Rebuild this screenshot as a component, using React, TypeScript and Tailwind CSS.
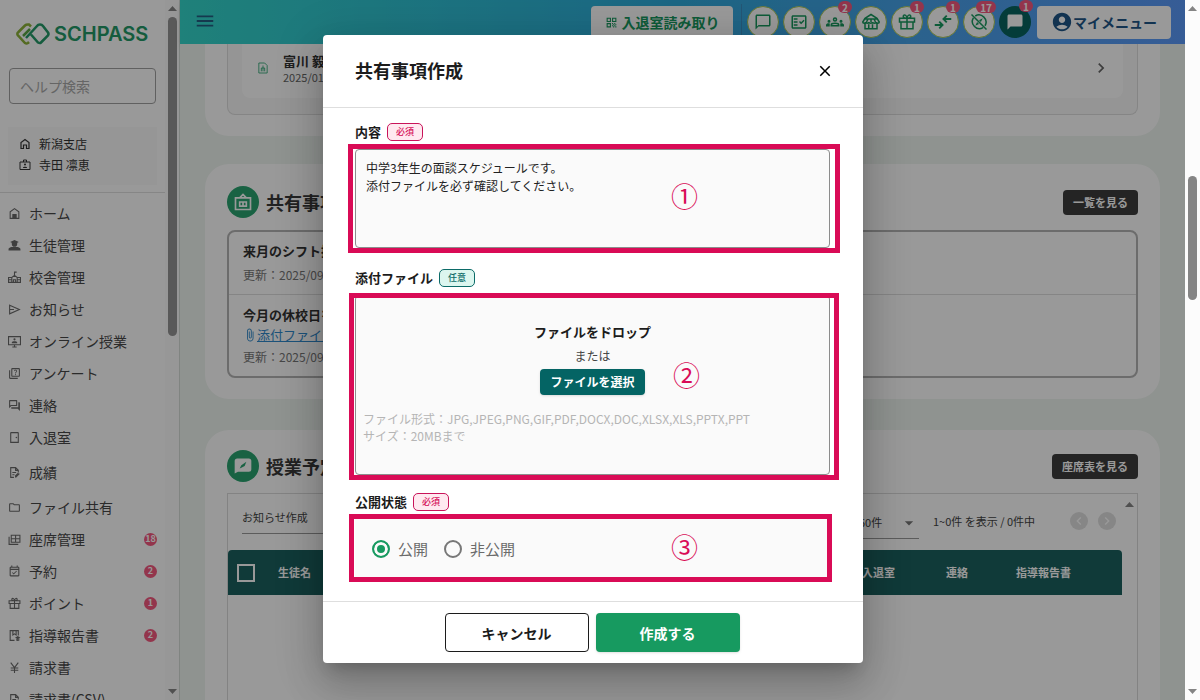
import type { ReactNode } from "react";
import {
  MdAccountCircle,
  MdArrowDropDown,
  MdAttachFile,
  MdChatBubble,
  MdChevronLeft,
  MdChevronRight,
  MdClose,
  MdMenu,
  MdOutlineChatBubbleOutline,
  MdOutlineEventAvailable,
  MdOutlineFactCheck,
  MdOutlineFolder,
  MdOutlineForum,
  MdOutlineQuiz,
  MdOutlineSensorDoor,
  MdQrCode,
} from "react-icons/md";

type IconProps = {
  className?: string;
};

type MenuItem = {
  label: string;
  icon: (props: IconProps) => ReactNode;
  count?: number;
  tall?: boolean;
};

type HeaderAction = {
  label: string;
  icon: (props: IconProps) => ReactNode;
  count?: number;
  filled?: boolean;
};

function LineIcon({ className, children }: IconProps & { children: ReactNode }) {
  return (
    <svg
      className={className}
      viewBox="0 0 24 24"
      width="1em"
      height="1em"
      fill="none"
      stroke="currentColor"
      strokeWidth="2"
      aria-hidden="true"
    >
      {children}
    </svg>
  );
}

function HouseIcon({ className }: IconProps) {
  return (
    <LineIcon className={className}>
      <path d="M4 21V9l8-6 8 6v12z" />
      <path d="M9 21v-7h6v7z" fill="currentColor" />
    </LineIcon>
  );
}

function BranchIcon({ className }: IconProps) {
  return (
    <LineIcon className={className}>
      <path d="M4 21V9l8-6 8 6v12h-5v-7H9v7z" strokeWidth="2.400" />
    </LineIcon>
  );
}

function StudentIcon({ className }: IconProps) {
  return (
    <LineIcon className={className}>
      <path
        d="M12 2 4 5.500l3 1.300V9a5 5 0 0 0 10 0V6.800l3-1.300zM1 21v-2c0-3 6-4.500 11-4.500s11 1.500 11 4.500v2z"
        fill="currentColor"
        stroke="none"
      />
    </LineIcon>
  );
}

function SchoolIcon({ className }: IconProps) {
  return (
    <LineIcon className={className}>
      <path d="M1 21V12h6l5-4 5 4h6v9zM7 12v9M17 12v9M12 8V2h4M10 21v-5h4v5M1 16h6M17 16h6" />
    </LineIcon>
  );
}

function SendIcon({ className }: IconProps) {
  return (
    <LineIcon className={className}>
      <path d="M3 4 21 12 3 20zM3 12h8" />
    </LineIcon>
  );
}

function LessonIcon({ className }: IconProps) {
  return (
    <LineIcon className={className}>
      <path d="M1 3h22v15H1zM8 22h8M12 18v4" />
      <path d="M12 6a2 2 0 1 0 0 4 2 2 0 0 0 0-4zM7 15v-1c0-3 10-3 10 0v1z" fill="currentColor" stroke="none" />
    </LineIcon>
  );
}

function GradeIcon({ className }: IconProps) {
  return (
    <LineIcon className={className}>
      <path d="M11 21H5V3h9l5 5v4M14 3v5h5M8 12h7M8 16h4M14 21l7-7M14 21v-3l5-5" />
    </LineIcon>
  );
}

function SeatIcon({ className }: IconProps) {
  return (
    <LineIcon className={className}>
      <path d="M6 4h16v13H6zM6 10.500h16M14 4v13M2 7v14h17" />
    </LineIcon>
  );
}

function GiftIcon({ className }: IconProps) {
  return (
    <LineIcon className={className}>
      <path d="M4 12h16v9H4zM2 7h20v5H2zM12 7v14M12 7C9 7 7 6 7 4.500S8.500 2 10 3s2 2.500 2 4zM12 7c3 0 5-1 5-2.500S15.500 2 14 3s-2 2.500-2 4z" />
    </LineIcon>
  );
}

function ReportIcon({ className }: IconProps) {
  return (
    <LineIcon className={className}>
      <path d="M12 21H4V3h15v9M9 3v8l3-2 3 2V3" />
      <path d="m18 13 5 3-5 3-5-3zM15 19v2l3 1 3-1v-2z" fill="currentColor" stroke="none" />
    </LineIcon>
  );
}

function YenIcon({ className }: IconProps) {
  return (
    <LineIcon className={className}>
      <path d="m5 3 7 9 7-9M12 12v10M5 13h14M5 17h14" />
    </LineIcon>
  );
}

function BadgeIcon({ className }: IconProps) {
  return (
    <LineIcon className={className}>
      <path d="M2 6h20v15H2zM9 6V2h6v4" />
      <path d="M12 9a2 2 0 1 0 0 4 2 2 0 0 0 0-4zM8 18v-1c0-2 8-2 8 0v1z" fill="currentColor" stroke="none" />
    </LineIcon>
  );
}

function GroupsIcon({ className }: IconProps) {
  return (
    <LineIcon className={className}>
      <path d="M7 17v-1c0-3 10-3 10 0v1z" />
      <circle cx="12" cy="8.500" r="2" />
      <path
        d="M4 9a2 2 0 1 0 0 4 2 2 0 0 0 0-4zM20 9a2 2 0 1 0 0 4 2 2 0 0 0 0-4zM0 18v-2c0-2 3-2.500 5-2v4zM24 18v-2c0-2-3-2.500-5-2v4z"
        fill="currentColor"
        stroke="none"
      />
    </LineIcon>
  );
}

function MarketIcon({ className }: IconProps) {
  return (
    <LineIcon className={className}>
      <path d="M12 2 4 7l-3 5c0 2 4 2 4 0 0 2 4 2 4 0 0 2 5 2 5 0 0 2 5 2 5 0 0 2 4 2 4 0l-3-5zM4 8h16M4 14v7h16v-7M9 21v-6M14 21v-6M8 8l-2 4M12 8v4M16 8l2 4" />
    </LineIcon>
  );
}

function MergeIcon({ className }: IconProps) {
  return (
    <LineIcon className={className}>
      <path d="M1 16h10M7 11.500l4.500 4.500L7 20.500M23 8H13M17 3.500 12.500 8l4.500 4.500" strokeWidth="2.400" />
    </LineIcon>
  );
}

function CompassOffIcon({ className }: IconProps) {
  return (
    <LineIcon className={className}>
      <path d="M7 4a9.500 9.500 0 0 1 13 13M4.500 6.500a9.500 9.500 0 0 0 13 13M2 2l20 20" />
      <path d="m17 7-5 2.500 2.500 2.500zM7 17l2.500-5 2.500 2.500z" fill="currentColor" stroke="none" />
    </LineIcon>
  );
}

const menuItems: MenuItem[] = [
  { label: "ホーム", icon: HouseIcon },
  { label: "生徒管理", icon: StudentIcon },
  { label: "校舎管理", icon: SchoolIcon },
  { label: "お知らせ", icon: SendIcon },
  { label: "オンライン授業", icon: LessonIcon },
  { label: "アンケート", icon: MdOutlineQuiz },
  { label: "連絡", icon: MdOutlineForum },
  { label: "入退室", icon: MdOutlineSensorDoor },
  { label: "成績", icon: GradeIcon, tall: true },
  { label: "ファイル共有", icon: MdOutlineFolder },
  { label: "座席管理", icon: SeatIcon, count: 18 },
  { label: "予約", icon: MdOutlineEventAvailable, count: 2 },
  { label: "ポイント", icon: GiftIcon, count: 1 },
  { label: "指導報告書", icon: ReportIcon, count: 2 },
  { label: "請求書", icon: YenIcon },
  { label: "請求書(CSV)", icon: GradeIcon },
];

const headerActions: HeaderAction[] = [
  { label: "メッセージ", icon: MdOutlineChatBubbleOutline },
  { label: "チェック", icon: MdOutlineFactCheck },
  { label: "グループ", icon: GroupsIcon, count: 2 },
  { label: "校舎", icon: MarketIcon },
  { label: "ポイント", icon: GiftIcon, count: 1 },
  { label: "振替", icon: MergeIcon, count: 1 },
  { label: "未確認", icon: CompassOffIcon, count: 17 },
  { label: "連絡", icon: MdChatBubble, count: 1, filled: true },
];

function Sidebar() {
  return (
    <aside className="flex w-[180px] shrink-0 overflow-hidden border-r border-[#d5dcd8] bg-white">
      <div className="min-w-0 flex-1">
        <div className="flex h-[68px] items-center gap-1 pl-4">
          <svg viewBox="0 0 34 22" className="h-[22px] w-[34px]" fill="none" strokeWidth="2.500" aria-hidden="true">
            <path d="M13 19 12 20q-1.500 1-3 0L2 12.500a2 2 0 0 1 0-3L9 2.500q1-1 3-1h1l2 2" stroke="#8cb33a" />
            <path d="m10 15 11-12q1-1.500 3-1.500t3 1.500l5 6.500q1 1.500 0 3l-7 7q-1 1-3 0l-7-8" stroke="#239a68" />
            <path d="m7 13 7-7" stroke="#5aa545" />
          </svg>
          <span className="font-[Inter] text-xl font-semibold text-[#239a68]">SCHPASS</span>
        </div>
        <div className="pr-2 pl-[9px]">
          <input
            type="text"
            aria-label="ヘルプ検索"
            placeholder="ヘルプ検索"
            className="h-9 w-[147px] rounded border border-[#a0a0a0] bg-white px-2.5 text-sm placeholder:text-[#a9a9a9]"
          />
        </div>
        <div className="mx-2 mt-[23px] flex h-[58px] flex-col justify-center gap-[3px] bg-[#fafafa] pb-1 pl-[11px] text-xs leading-[18px] text-[#333]">
          <p className="flex items-center gap-2">
            <BranchIcon className="size-3" />
            新潟支店
          </p>
          <p className="flex items-center gap-2">
            <BadgeIcon className="size-3" />
            寺田 凛恵
          </p>
        </div>
        <nav className="mt-[7px] border-t border-[#e0e0e0] pt-1">
          {menuItems.map(({ label, icon: Icon, count, tall }) => (
            <a
              key={label}
              href="#"
              className={`flex items-center pl-2 text-sm text-[#484848] ${tall ? "h-[38px]" : "h-8"}`}
            >
              <Icon className="mr-2 size-[13px] text-[#6a6a6a]" />
              <span className="flex-1">{label}</span>
              {count && (
                <span className="mr-2 flex size-[13px] items-center justify-center rounded-full bg-[#f5597f] text-[9px] font-bold text-white">
                  {count}
                </span>
              )}
            </a>
          ))}
        </nav>
      </div>
      <div className="flex h-full w-[14px] flex-col items-center bg-[#fcfcfc] py-1.5">
        <MenuArrow className="rotate-180" />
        <div className="mt-1.5 h-[319px] w-[9px] rounded-full bg-[#949494]" />
        <MenuArrow className="mt-auto" />
      </div>
    </aside>
  );
}

function MenuArrow({ className }: IconProps) {
  return (
    <svg viewBox="0 0 9 5" className={`h-[5px] w-[9px] shrink-0 fill-[#858585] ${className}`} aria-hidden="true">
      <path d="M0 0h9L4.500 5z" />
    </svg>
  );
}

function Header() {
  return (
    <header className="flex h-11 shrink-0 items-center justify-between bg-linear-to-r from-[#34d7cb] via-[#30aadd] to-[#5b9afa] pr-[14px] pl-[14px] shadow-md">
      <button type="button" aria-label="メニュー" className="pb-0.5 text-[#245f83]">
        <MdMenu className="size-[22px]" />
      </button>
      <div className="flex items-center">
        <button
          type="button"
          className="mr-2 flex h-8 w-[142px] items-center justify-center gap-1 rounded-sm bg-white text-sm font-bold text-[#18995f]"
        >
          <MdQrCode className="size-[13px]" />
          入退室読み取り
        </button>
        <div className="mr-[5px] h-9 w-px bg-[#3d8fc4]" />
        <div className="flex gap-1">
          {headerActions.map(({ label, icon: Icon, count, filled }, index) => (
            <button
              key={index}
              type="button"
              aria-label={label}
              className={`relative flex size-8 items-center justify-center rounded-full ${
                filled ? "bg-[#08655f] text-white" : "border border-[#a9c95a] bg-white text-[#18995f]"
              }`}
            >
              <Icon className="size-[18px]" />
              {count && (
                <span className="absolute -top-1.5 -right-0.5 flex h-3 min-w-3.5 items-center justify-center rounded-full bg-[#f5597f] px-1 text-[10px] font-bold text-white">
                  {count}
                </span>
              )}
            </button>
          ))}
        </div>
        <button
          type="button"
          className="ml-1.5 flex h-[33px] w-[134px] items-center justify-center rounded-sm bg-white text-sm font-bold text-[#1e5688]"
        >
          <MdAccountCircle className="size-[22px]" />
          マイメニュー
        </button>
      </div>
    </header>
  );
}

function SectionHead({ icon, title, action }: { icon: ReactNode; title: string; action: string }) {
  return (
    <div className="flex items-center justify-between">
      <div className="flex items-center gap-[7px]">
        <span className="flex size-8 items-center justify-center rounded-full bg-[#2aa470] text-white">{icon}</span>
        <h2 className="text-lg font-bold text-[#3a3a3a]">{title}</h2>
      </div>
      <button type="button" className="h-[25px] rounded-sm bg-[#3c3c3c] px-2.5 text-[11px] font-bold text-white">
        {action}
      </button>
    </div>
  );
}

function Content() {
  return (
    <main className="flex-1 overflow-hidden bg-[#eff5f0] px-[25px]">
      <section className="rounded-b-3xl bg-white px-[22px] pb-[21px]">
        <div className="rounded-b-lg border border-t-0 border-[#dedede] bg-[#f8f8f8] px-[14px] pb-4">
          <div className="flex h-[54px] items-center rounded-b-lg bg-white pr-3 pb-1.5 pl-4">
            <svg viewBox="0 0 12 14" className="mr-[15px] h-3 w-2.5" fill="none" stroke="#2aa470" aria-hidden="true">
              <path d="M1 13V1h7l3 3v9zM4 11V7h4v4M6 4v7" />
            </svg>
            <div className="flex-1">
              <p className="text-[13px] leading-[17px] font-bold text-[#333]">富川 毅</p>
              <p className="text-[11px] leading-4 text-[#666]">2025/01/15</p>
            </div>
            <MdChevronRight className="size-5 text-[#666]" />
          </div>
        </div>
      </section>

      <section className="mt-7 rounded-3xl bg-white px-[22px] pt-[22px] pb-[21px]">
        <SectionHead icon={<BuildingIcon />} title="共有事項" action="一覧を見る" />
        <div className="mt-3 rounded-lg border-2 border-[#b4b4b4]">
          <div className="h-[63px] border-b border-[#dedede] px-[14px] pt-[9px]">
            <p className="text-[13px] leading-5 font-bold text-[#333]">来月のシフト提出について</p>
            <p className="mt-1 text-xs leading-5 text-[#777]">更新：2025/09/10</p>
          </div>
          <div className="h-[81px] px-[14px] pt-2.5">
            <p className="text-[13px] leading-5 font-bold text-[#333]">今月の休校日をご確認ください</p>
            <a href="#" className="flex items-center text-[13px] leading-5 text-[#3089cb]">
              <MdAttachFile className="size-[14px]" />
              <span className="underline">添付ファイル</span>
            </a>
            <p className="mt-0.5 text-xs leading-5 text-[#777]">更新：2025/09/01</p>
          </div>
        </div>
      </section>

      <section className="mt-[31px] h-[400px] rounded-3xl bg-white px-[22px] pt-5">
        <SectionHead icon={<BoardIcon />} title="授業予定" action="座席表を見る" />
        <div className="mt-[11px] flex h-80 border border-[#dadada]">
          <div className="min-w-0 flex-1">
            <div className="flex h-14 items-center justify-between pb-0.5 pl-[14px] text-[#444]">
              <select aria-label="操作" className="mb-1.5 h-8 w-40 appearance-none border-b border-[#999] text-[11px]">
                <option>お知らせ作成</option>
              </select>
              <div className="flex items-center text-[11px]">
                <div className="relative mr-[14px] pt-1">
                  <select
                    aria-label="表示件数"
                    className="h-8 w-[60px] appearance-none border-b border-[#999] text-[11px]"
                  >
                    <option>50件</option>
                  </select>
                  <MdArrowDropDown className="pointer-events-none absolute top-2.5 right-0 size-5 text-[#777]" />
                </div>
                <span className="w-[137px]">1~0件 を表示 / 0件中</span>
                <button
                  type="button"
                  aria-label="前へ"
                  className="mr-2.5 flex size-[18px] items-center justify-center rounded-full bg-[#e0e0e0] text-white"
                >
                  <MdChevronLeft className="size-4" />
                </button>
                <button
                  type="button"
                  aria-label="次へ"
                  className="mr-1.5 flex size-[18px] items-center justify-center rounded-full bg-[#e0e0e0] text-white"
                >
                  <MdChevronRight className="size-4" />
                </button>
              </div>
            </div>
            <table className="w-full text-left text-[11px] font-bold text-white">
              <thead>
                <tr className="h-[45px] bg-[#1c625f]">
                  <th className="w-[50px] rounded-tl pl-[9px]">
                    <input
                      type="checkbox"
                      aria-label="すべて選択"
                      className="block size-[18px] appearance-none border-2 border-white"
                    />
                  </th>
                  <th>生徒名</th>
                  <th className="w-[84px]">入退室</th>
                  <th className="w-[70px]">連絡</th>
                  <th className="w-[106px] rounded-tr">指導報告書</th>
                </tr>
              </thead>
            </table>
          </div>
          <div className="w-[15px] pt-2 pl-[3px]">
            <MenuArrow className="rotate-180" />
          </div>
        </div>
      </section>
    </main>
  );
}

function BuildingIcon() {
  return (
    <LineIcon className="size-5">
      <path d="M3 7h18v14H3zM8 7l4-4 4 4M7 12h10M8 11v6h8v-6M12 11v6" />
    </LineIcon>
  );
}

function BoardIcon() {
  return (
    <svg viewBox="0 0 24 24" className="size-5" aria-hidden="true">
      <path d="M2 6q0-3 3-3h14q3 0 3 3v10q0 3-3 3H6l-4 2z" fill="currentColor" />
      <path d="m8 15 2-4 6-4-2 5-4 2z" fill="#2aa470" />
    </svg>
  );
}

function FieldLabel({ text, required }: { text: string; required?: boolean }) {
  return (
    <span className="flex h-[18px] items-center gap-1.5">
      <span className="text-[13px] font-bold text-[#1c1c1c]">{text}</span>
      <span
        className={`flex h-[18px] w-9 items-center justify-center rounded-[5px] border text-[9px] font-medium ${
          required ? "border-[#c9145a] bg-[#ffe9f0] text-[#d6105a]" : "border-[#0c6b68] bg-[#dcf6ef] text-[#0c6b68]"
        }`}
      >
        {required ? "必須" : "任意"}
      </span>
    </span>
  );
}

// Guide frame and its number, drawn over a field
function Marker({ frame, place, text }: { frame: string; place: string; text: string }) {
  return (
    <>
      <div className={`pointer-events-none absolute border-[5px] border-[#d90b56] ${frame}`} />
      <span className={`pointer-events-none absolute text-[27px] leading-7 text-[#d90b56] ${place}`}>{text}</span>
    </>
  );
}

function ShareDialog() {
  return (
    <form
      role="dialog"
      aria-labelledby="share-title"
      className="w-[540px] rounded bg-white shadow-[0_11px_15px_-7px_rgba(0,0,0,0.2),0_24px_38px_3px_rgba(0,0,0,0.14),0_9px_46px_8px_rgba(0,0,0,0.12)]"
    >
      <div className="flex h-[73px] items-center justify-between border-b border-[#dedede] pr-[29px] pl-8">
        <h1 id="share-title" className="pb-0.5 text-lg font-bold text-[#1c1c1c]">
          共有事項作成
        </h1>
        <button type="button" aria-label="閉じる">
          <MdClose className="size-[18px]" />
        </button>
      </div>

      <div className="pt-[15px] pr-[33px] pb-6 pl-8">
        <label htmlFor="share-body" className="block">
          <FieldLabel text="内容" required />
        </label>
        <div className="relative mt-2">
          <textarea
            id="share-body"
            className="block h-[99px] w-full resize-none rounded border border-[#8c8c8c] bg-[#fafafa] px-2.5 py-[9px] text-xs leading-[18px] text-[#222]"
            defaultValue={"中学3年生の面談スケジュールです。\n添付ファイルを必ず確認してください。"}
          />
          <Marker frame="-top-[5px] -right-2.5 -bottom-[5px] -left-[7px]" place="top-[33px] right-[132px]" text="①" />
        </div>

        <div className="mt-[21px]">
          <FieldLabel text="添付ファイル" />
        </div>
        <div className="relative mt-2 h-[180px] rounded border border-[#8c8c8c] bg-[#fafafa] px-[7px] pt-[27px]">
          <div className="flex flex-col items-center">
            <p className="text-[13px] leading-[18px] font-bold text-[#1c1c1c]">ファイルをドロップ</p>
            <p className="mt-1.5 text-xs leading-[18px] text-[#444]">または</p>
            <button
              type="button"
              className="mt-1 h-[26px] w-[105px] rounded-sm bg-[#046464] text-xs font-bold text-white shadow"
            >
              ファイルを選択
            </button>
          </div>
          <p className="mt-[15px] text-xs leading-[17px] text-[#b5b5b5]">
            ファイル形式：JPG,JPEG,PNG,GIF,PDF,DOCX,DOC,XLSX,XLS,PPTX,PPT
            <br />
            サイズ：20MBまで
          </p>
          <Marker frame="-top-[3px] -right-2.5 -bottom-[6px] -left-[7px]" place="top-[65px] right-[129px]" text="②" />
        </div>

        <fieldset className="mt-[18px]">
          <legend className="block">
            <FieldLabel text="公開状態" required />
          </legend>
          <div className="relative mt-2 flex h-[58px] items-center gap-4 bg-[#fafafa] pt-0.5 pl-[17px] text-[15px] text-[#6b6b6b]">
            <label className="flex items-center gap-2">
              <input
                type="radio"
                name="status"
                defaultChecked
                className="size-[18px] appearance-none rounded-full border-2 border-[#179a60] bg-[#179a60] shadow-[inset_0_0_0_3px_#fafafa]"
              />
              公開
            </label>
            <label className="flex items-center gap-2">
              <input
                type="radio"
                name="status"
                className="size-[18px] appearance-none rounded-full border-2 border-[#777]"
              />
              非公開
            </label>
            <Marker frame="-top-[5px] -right-0.5 -bottom-[5px] -left-[6px]" place="top-[14px] right-[132px]" text="③" />
          </div>
        </fieldset>
      </div>

      <div className="flex justify-center gap-[7px] border-t border-[#dedede] py-[11px] pr-0.5">
        <button
          type="button"
          className="h-[39px] w-36 rounded border border-[#1c1c1c] bg-white text-sm font-bold text-[#1c1c1c]"
        >
          キャンセル
        </button>
        <button type="submit" className="h-[39px] w-36 rounded-sm bg-[#179a60] text-sm font-bold text-white shadow">
          作成する
        </button>
      </div>
    </form>
  );
}

export default function App() {
  return (
    <div className="flex h-screen overflow-hidden bg-white font-['Noto_Sans_CJK_JP',sans-serif]">
      <div className="relative flex min-w-0 flex-1 overflow-hidden">
        <Sidebar />
        <div className="flex min-w-0 flex-1 flex-col">
          <Header />
          <Content />
        </div>
        <div className="absolute inset-0 flex items-center justify-center bg-black/40 pb-0.5 pl-px">
          <ShareDialog />
        </div>
      </div>
      <div className="flex w-[15px] shrink-0 flex-col items-center bg-[#fcfcfc] py-1.5">
        <MenuArrow className="rotate-180" />
        <div className="mt-[165px] h-[124px] w-[9px] rounded-full bg-[#858585]" />
        <MenuArrow className="mt-auto" />
      </div>
    </div>
  );
}
